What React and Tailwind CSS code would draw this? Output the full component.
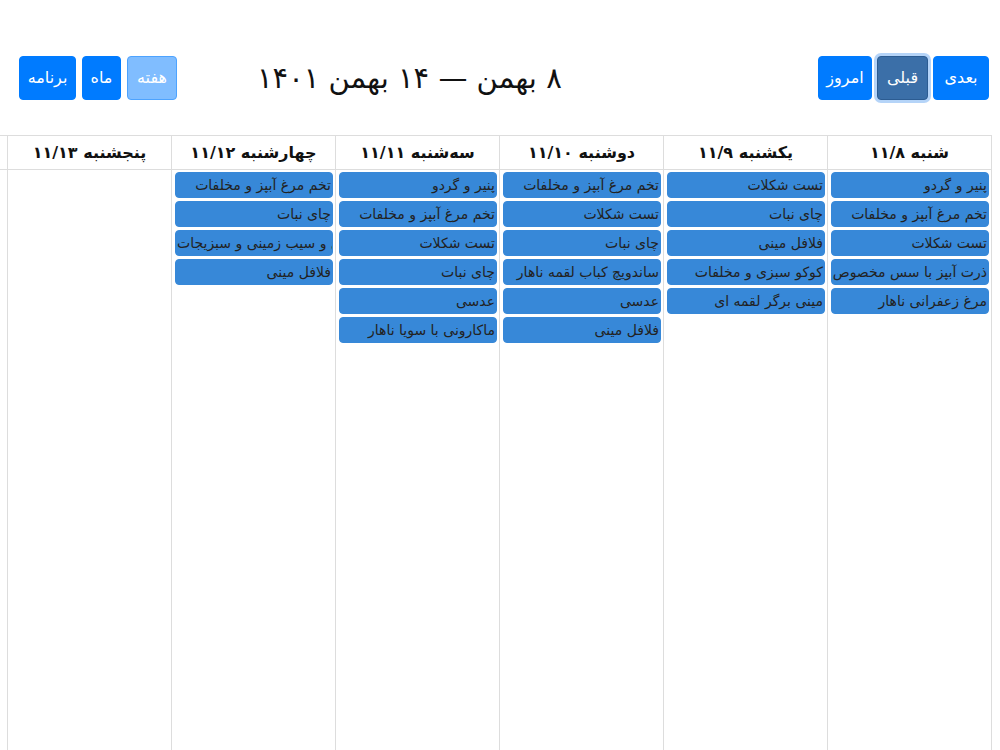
const days = [
  {
    title: "شنبه ۱۱/۸",
    events: ["پنیر و گردو", "تخم مرغ آبپز و مخلفات", "تست شکلات", "ذرت آبپز با سس مخصوص", "مرغ زعفرانی ناهار"],
  },
  {
    title: "یکشنبه ۱۱/۹",
    events: ["تست شکلات", "چای نبات", "فلافل مینی", "کوکو سبزی و مخلفات", "مینی برگر لقمه ای"],
  },
  {
    title: "دوشنبه ۱۱/۱۰",
    events: ["تخم مرغ آبپز و مخلفات", "تست شکلات", "چای نبات", "ساندویچ کباب لقمه ناهار", "عدسی", "فلافل مینی"],
  },
  {
    title: "سه‌شنبه ۱۱/۱۱",
    events: ["پنیر و گردو", "تخم مرغ آبپز و مخلفات", "تست شکلات", "چای نبات", "عدسی", "ماکارونی با سویا ناهار"],
  },
  {
    title: "چهارشنبه ۱۱/۱۲",
    events: ["تخم مرغ آبپز و مخلفات", "چای نبات", { text: "مرغ و سیب زمینی و سبزیجات", clip: true }, "فلافل مینی"],
  },
  { title: "پنجشنبه ۱۱/۱۳", events: [] },
  { title: "جمعه ۱۱/۱۴", events: [] },
];

function Btn({ children, className }) {
  return (
    <button
      className={
        "h-[44px] rounded-[4px] border text-[16px] text-white flex items-center justify-center " +
        className
      }
    >
      {children}
    </button>
  );
}

function Event({ ev }) {
  const text = typeof ev === "string" ? ev : ev.text;
  const clip = typeof ev !== "string" && ev.clip;
  return (
    <div
      className={
        "h-[26px] mr-[2px] ml-[3px] mb-[3px] rounded-[4px] bg-[#3788d8] border border-[#3788d8] px-[1px] text-[14px] leading-[24px] text-[#222] whitespace-nowrap overflow-hidden " +
        (clip ? "flex justify-end" : "")
      }
    >
      {clip ? <span className="shrink-0">{text}</span> : text}
    </div>
  );
}

export default function App() {
  return (
    <div
      dir="rtl"
      className="w-[1000px] h-[750px] overflow-hidden bg-white text-[#212529]"
      style={{ fontFamily: "'DejaVu Sans', sans-serif" }}
    >
      {/* Toolbar */}
      <div className="flex items-center pt-[56px] pr-[11px] pl-[19px] h-[100px]">
        <div className="flex gap-[5px]">
          <Btn className="w-[56px] bg-[#007bff] border-[#007bff]">بعدی</Btn>
          <Btn className="w-[51px] bg-[#3b6fa8] border-[#2c5c92] shadow-[0_0_0_3px_rgba(90,160,240,0.45)]">قبلی</Btn>
          <Btn className="w-[54px] bg-[#007bff] border-[#007bff]">امروز</Btn>
        </div>
        <div className="flex-1" />
        <h2 className="ml-[80px] text-[29px] leading-[44px] font-normal text-[#111]">
          ۸ بهمن — ۱۴ بهمن ۱۴۰۱
        </h2>
        <div className="flex gap-[6px]">
          <Btn className="w-[50px] bg-[#80bdff] border-[#4da3ff]">هفته</Btn>
          <Btn className="w-[39px] bg-[#007bff] border-[#007bff]">ماه</Btn>
          <Btn className="w-[57px] bg-[#007bff] border-[#007bff]">برنامه</Btn>
        </div>
      </div>

      {/* Week grid */}
      <div className="mt-[35px] mr-[8px] flex h-[615px] border-r border-[#ddd]">
        {days.map((d) => (
          <div key={d.title} className="w-[164px] shrink-0 border-l border-[#ddd] flex flex-col">
            <div className="h-[35px] border-t border-b border-[#ddd] flex items-center justify-center text-[16px] font-bold text-[#111]">
              {d.title}
            </div>
            <div className="pt-[2px] flex-1">
              {d.events.map((ev, i) => (
                <Event key={i} ev={ev} />
              ))}
            </div>
          </div>
        ))}
      </div>
    </div>
  );
}
